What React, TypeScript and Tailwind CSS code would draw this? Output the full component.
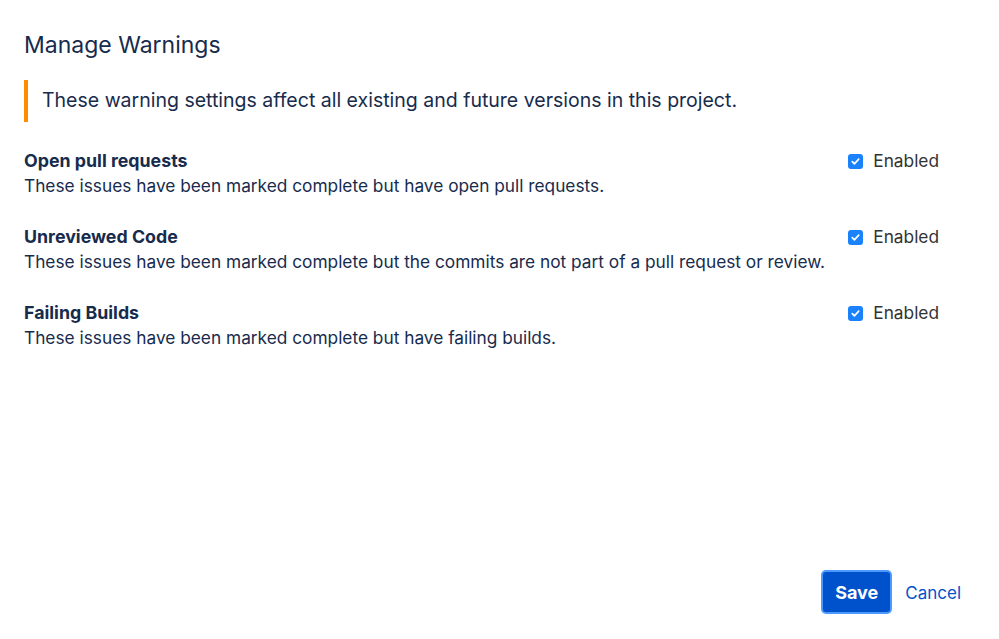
import React from "react";

const rows = [
  {
    title: "Open pull requests",
    desc: "These issues have been marked complete but have open pull requests.",
  },
  {
    title: "Unreviewed Code",
    desc: "These issues have been marked complete but the commits are not part of a pull request or review.",
  },
  {
    title: "Failing Builds",
    desc: "These issues have been marked complete but have failing builds.",
  },
];

function Check() {
  return (
    <span className="flex h-[15px] w-[15px] items-center justify-center rounded-[3px] bg-[#1a82fb]">
      <svg width="11" height="11" viewBox="0 0 12 12" fill="none">
        <path d="M2.5 6.2l2.3 2.4L9.5 3.4" stroke="white" strokeWidth="1.8" strokeLinecap="round" strokeLinejoin="round" />
      </svg>
    </span>
  );
}

export default function App() {
  return (
    <div
      className="flex h-[639px] w-[999px] flex-col bg-white px-6 text-[#172B4D]"
      style={{ fontFamily: "Inter, 'Liberation Sans', sans-serif" }}
    >
      <h1 className="mt-[31px] text-[23px] leading-7">Manage Warnings</h1>

      <div className="mt-[21px] flex h-[42px] items-center border-l-4 border-[#FF8B00] pl-[14px] text-[19.5px]">
        These warning settings affect all existing and future versions in this project.
      </div>

      <div className="mt-[27px] flex flex-col gap-[26px]">
        {rows.map((r) => (
          <div key={r.title} className="flex items-start justify-between">
            <div>
              <div className="text-[17.8px] font-bold leading-[24px]">{r.title}</div>
              <div className="text-[17.3px] leading-[26px]">{r.desc}</div>
            </div>
            <label className="mr-[36px] flex items-center gap-[10px] text-[17.3px] leading-[24px] text-[#333]">
              <Check />
              Enabled
            </label>
          </div>
        ))}
      </div>

      <div className="mt-auto mb-[25px] flex items-center justify-end gap-[13px] pr-[14px]">
        <button className="flex h-[44px] w-[71px] items-center justify-center rounded-[5px] border-2 border-[#4C9AFF] bg-[#0052CC] text-[18px] font-bold text-white">
          Save
        </button>
        <button className="pt-[3px] text-[17px] text-[#0052CC]">Cancel</button>
      </div>
    </div>
  );
}
